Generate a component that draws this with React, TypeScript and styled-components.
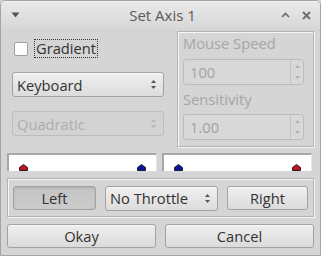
import React from 'react';
import styled, { createGlobalStyle } from 'styled-components';

const GlobalStyle = createGlobalStyle`
  html, body {
    margin: 0;
    padding: 0;
    background: #d5d5d5;
  }
  body {
    font-family: 'Open Sans', 'Noto Sans', 'DejaVu Sans', sans-serif;
    font-size: 14.7px;
    color: #333;
  }
`;

const UpDown = ({ color = '#555' }: { color?: string }) => (
  <svg width="7" height="11" viewBox="0 0 7 11">
    <path d="M3.5 1 L6 4 L1 4 Z" fill={color} />
    <path d="M3.5 10 L6 7 L1 7 Z" fill={color} />
  </svg>
);

const Marker = ({ color }: { color: string }) => (
  <svg width="9" height="7" viewBox="0 0 9 7">
    <path d="M4.5 0.5 L8.5 3.5 L8.5 6.5 L0.5 6.5 L0.5 3.5 Z" fill={color} stroke="#202020" strokeWidth="1" />
  </svg>
);

const Combo = ({ label, disabled, width }: { label: string; disabled?: boolean; width: number }) => (
  <ComboBox $disabled={disabled} style={{ width }}>
    <span>{label}</span>
    <UpDown color={disabled ? '#b8b8b8' : '#555'} />
  </ComboBox>
);

const SpinBox = ({ value }: { value: string }) => (
  <Spin>
    <SpinValue>{value}</SpinValue>
    <SpinButtons>
      <svg width="7" height="20" viewBox="0 0 7 20">
        <path d="M3.5 3 L6 6 L1 6 Z" fill="#b0b0b0" />
        <path d="M3.5 17 L6 14 L1 14 Z" fill="#b0b0b0" />
      </svg>
    </SpinButtons>
  </Spin>
);

const App = () => {
  return (
    <>
      <GlobalStyle />
      <Window>
        <TitleBar>
          <svg width="9" height="6" viewBox="0 0 9 6">
            <path d="M0.5 0.5 L8.5 0.5 L4.5 5.5 Z" fill="#555" />
          </svg>
          <Title>Set Axis 1</Title>
          <TitleButtons>
            <svg width="9" height="6" viewBox="0 0 9 6">
              <path d="M1 5 L4.5 1.5 L8 5" fill="none" stroke="#6a6a6a" strokeWidth="1.6" />
            </svg>
            <svg width="9" height="9" viewBox="0 0 9 9">
              <path d="M1 1 L8 8 M8 1 L1 8" fill="none" stroke="#707070" strokeWidth="2" />
            </svg>
          </TitleButtons>
        </TitleBar>
        <Body>
          <Top>
            <LeftCol>
              <CheckRow>
                <CheckBox />
                <FocusLabel>Gradient</FocusLabel>
              </CheckRow>
              <Combo label="Keyboard" width={152} />
              <Combo label="Quadratic" width={152} disabled />
            </LeftCol>
            <GroupBox>
              <DimLabel>Mouse Speed</DimLabel>
              <SpinBox value="100" />
              <DimLabel>Sensitivity</DimLabel>
              <SpinBox value="1.00" />
            </GroupBox>
          </Top>
          <AxisRow>
            <AxisBar>
              <Marker color="#c8101c" />
              <Marker color="#1010a8" />
            </AxisBar>
            <AxisBar>
              <Marker color="#1010a8" />
              <Marker color="#c8101c" />
            </AxisBar>
          </AxisRow>
          <ThrottleGroup>
            <Button $pressed $width={83}>Left</Button>
            <Combo label="No Throttle" width={113} />
            <Button $width={81}>Right</Button>
          </ThrottleGroup>
          <DialogButtons>
            <Button $width={149}>Okay</Button>
            <Button $width={149}>Cancel</Button>
          </DialogButtons>
        </Body>
      </Window>
    </>
  );
};

const Window = styled.div`
  width: 321px;
  height: 256px;
  box-sizing: border-box;
  border: 1px solid #a4a4a4;
  border-radius: 5px 5px 0 0;
  background: #d5d5d5;
  display: flex;
  flex-direction: column;
  overflow: hidden;
`;

const TitleBar = styled.div`
  height: 27px;
  display: flex;
  align-items: center;
  padding: 0 9px 0 10px;
  background: linear-gradient(#e9e9e9, #d8d8d8);
  border-top: 1px solid #f4f4f4;
  box-sizing: border-box;
`;

const Title = styled.div`
  flex: 1;
  text-align: center;
  color: #5a5a5a;
  font-size: 15px;
  padding-left: 24px;
`;

const TitleButtons = styled.div`
  display: flex;
  align-items: center;
  gap: 12px;
`;

const Body = styled.div`
  flex: 1;
  display: flex;
  flex-direction: column;
  padding: 3px 6px 0 6px;
`;

const Top = styled.div`
  display: flex;
  justify-content: space-between;
  height: 116px;
`;

const LeftCol = styled.div`
  display: flex;
  flex-direction: column;
  gap: 14px;
  padding: 8px 0 0 5px;
`;

const CheckRow = styled.div`
  display: flex;
  align-items: center;
  gap: 6px;
  padding-left: 2px;
  height: 19px;
`;

const CheckBox = styled.div`
  width: 12px;
  height: 12px;
  border: 1px solid #a0a0a0;
  border-radius: 2px;
  background: #fff;
`;

const FocusLabel = styled.span`
  border: 1px dotted #333;
  padding: 0 1px;
  line-height: 17px;
  color: #333;
`;

const ComboBox = styled.div<{ $disabled?: boolean }>`
  height: 25px;
  box-sizing: border-box;
  display: flex;
  align-items: center;
  justify-content: space-between;
  padding: 0 6px 0 4px;
  border: 1px solid ${(p) => (p.$disabled ? '#bdbdbd' : '#a2a2a2')};
  border-radius: 3px;
  color: ${(p) => (p.$disabled ? '#adadad' : '#333')};
  background: ${(p) => (p.$disabled ? '#d3d3d3' : 'linear-gradient(#f0f0f0, #dcdcdc)')};
  box-shadow: ${(p) => (p.$disabled ? 'none' : 'inset 0 1px 0 #fafafa')};
`;

const GroupBox = styled.div`
  width: 137px;
  box-sizing: border-box;
  border: 1px solid #b4b4b4;
  box-shadow: inset 1px 1px 0 #f6f6f6, 1px 1px 0 #f6f6f6;
  display: flex;
  flex-direction: column;
  padding: 3px 9px 0 5px;
`;

const DimLabel = styled.div`
  color: #a6a6a6;
  height: 24px;
  line-height: 17px;
`;

const Spin = styled.div`
  height: 26px;
  box-sizing: border-box;
  display: flex;
  border: 1px solid #bcbcbc;
  border-radius: 3px;
  background: #d8d8d8;
  margin-bottom: 6px;
`;

const SpinValue = styled.div`
  flex: 1;
  display: flex;
  align-items: center;
  padding-left: 6px;
  color: #a2a2a2;
`;

const SpinButtons = styled.div`
  width: 12px;
  display: flex;
  align-items: center;
  justify-content: center;
  border-left: 1px solid #c4c4c4;
`;

const AxisRow = styled.div`
  display: flex;
  justify-content: space-between;
  margin-top: 6px;
  padding-right: 2px;
`;

const AxisBar = styled.div`
  width: 150px;
  height: 18px;
  box-sizing: border-box;
  background: #fff;
  border-top: 2px solid #a8a8a8;
  border-left: 2px solid #a8a8a8;
  border-right: 1px solid #e6e6e6;
  display: flex;
  align-items: flex-end;
  justify-content: space-between;
  padding: 0 10px 0 10px;
`;

const ThrottleGroup = styled.div`
  margin-top: 7px;
  height: 39px;
  box-sizing: border-box;
  border: 1px solid #b4b4b4;
  box-shadow: inset 1px 1px 0 #f6f6f6, 1px 1px 0 #f6f6f6;
  display: flex;
  align-items: center;
  justify-content: space-between;
  padding: 1px 5px 0 5px;
`;

const Button = styled.div<{ $pressed?: boolean; $width: number }>`
  width: ${(p) => p.$width}px;
  height: 24px;
  box-sizing: border-box;
  display: flex;
  align-items: center;
  justify-content: center;
  border: 1px solid #a2a2a2;
  border-radius: 3px;
  color: #333;
  background: ${(p) => (p.$pressed ? 'linear-gradient(#c4c4c4, #cbcbcb)' : 'linear-gradient(#efefef, #dbdbdb)')};
  box-shadow: ${(p) => (p.$pressed ? 'inset 0 1px 2px #aaa' : 'inset 0 1px 0 #fafafa')};
`;

const DialogButtons = styled.div`
  margin-top: 7px;
  display: flex;
  justify-content: space-between;
`;

export default App;
